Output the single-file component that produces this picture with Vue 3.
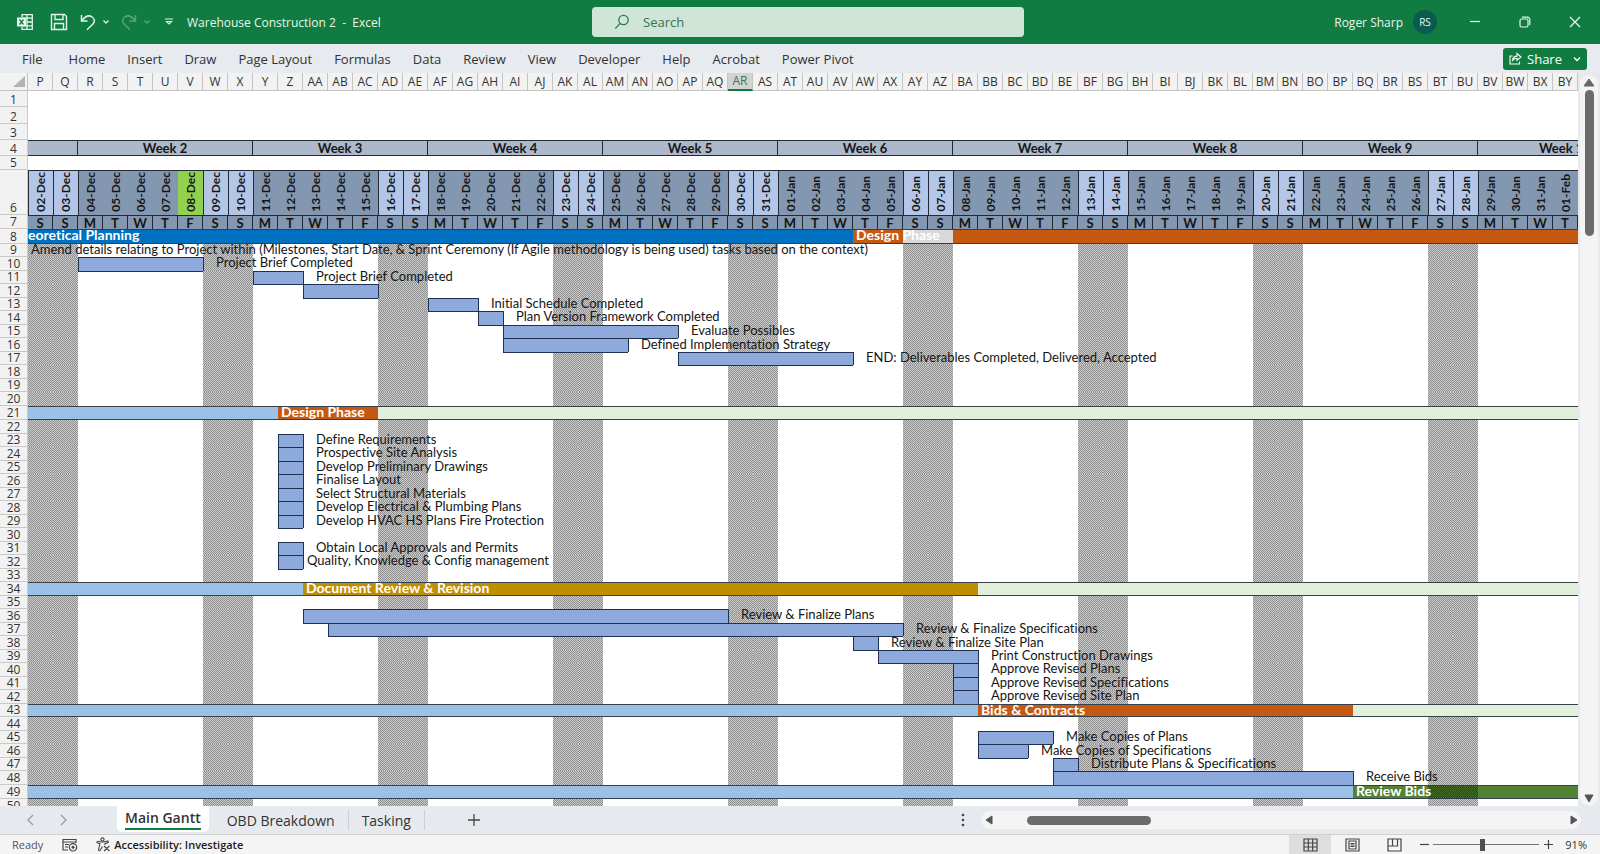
<script setup>
import { ref } from 'vue'

const menus = ['Home', 'Insert', 'Draw', 'Page Layout', 'Formulas', 'Data', 'Review', 'View', 'Developer', 'Help', 'Acrobat', 'Power Pivot']
const search = ref('')
const zoom = ref(91)

const COLS = 62
const letters = 'ABCDEFGHIJKLMNOPQRSTUVWXYZ'
const colName = (n) => (n < 26 ? letters[n] : letters[Math.floor(n / 26) - 1] + letters[n % 26])
const columns = Array.from({ length: COLS }, (_, i) => colName(i + 15))
const weekend = (c) => c % 7 < 2

const months = ['Jan', 'Feb', 'Mar', 'Apr', 'May', 'Jun', 'Jul', 'Aug', 'Sep', 'Oct', 'Nov', 'Dec']
const dates = columns.map((_, i) => {
  const d = new Date(2023, 11, 2 + i)
  return String(d.getDate()).padStart(2, '0') + '-' + months[d.getMonth()]
})
const dayLetters = columns.map((_, i) => 'SSMTWTF'[i % 7])
const weeks = [2, 3, 4, 5, 6, 7, 8, 9]

// Task bars: row -> [first column, column after the last]
const bars = {
  10: [2, 7], 11: [9, 11], 12: [11, 14], 13: [16, 18], 14: [18, 19], 15: [19, 26], 16: [19, 24], 17: [26, 33],
  23: [10, 11], 24: [10, 11], 25: [10, 11], 26: [10, 11], 27: [10, 11], 28: [10, 11], 29: [10, 11],
  31: [10, 11], 32: [10, 11],
  36: [11, 28], 37: [12, 35], 38: [33, 34], 39: [34, 38], 40: [37, 38], 41: [37, 38], 42: [37, 38],
  45: [38, 41], 46: [38, 40], 47: [41, 42], 48: [41, 53],
}
const labels = {
  10: 'Project Brief Completed', 11: 'Project Brief Completed', 13: 'Initial Schedule Completed',
  14: 'Plan Version Framework Completed', 15: 'Evaluate Possibles', 16: 'Defined Implementation Strategy',
  17: 'END: Deliverables Completed, Delivered, Accepted',
  23: 'Define Requirements', 24: 'Prospective Site Analysis', 25: 'Develop Preliminary Drawings',
  26: 'Finalise Layout', 27: 'Select Structural Materials', 28: 'Develop Electrical & Plumbing Plans',
  29: 'Develop HVAC HS Plans Fire Protection', 31: 'Obtain Local Approvals and Permits',
  32: 'Quality, Knowledge & Config management',
  36: 'Review & Finalize Plans', 37: 'Review & Finalize Specifications', 38: 'Review & Finalize Site Plan',
  39: 'Print Construction Drawings', 40: 'Approve Revised Plans', 41: 'Approve Revised Specifications',
  42: 'Approve Revised Site Plan', 45: 'Make Copies of Plans', 46: 'Make Copies of Specifications',
  47: 'Distribute Plans & Specifications', 48: 'Receive Bids',
}
// Phase rows: segments of [columns, colour class, text]
const phases = {
  8: [[33, 'blue', 'eoretical Planning'], [2, 'orange', 'Design Phase'], [2, 'pale', ''], [25, 'orange', '']],
  21: [[10, 'sky', ''], [4, 'orange', 'Design Phase'], [48, 'mint', '']],
  34: [[11, 'sky', ''], [27, 'gold', 'Document Review & Revision'], [24, 'mint', '']],
  43: [[38, 'sky', ''], [15, 'orange', 'Bids & Contracts'], [9, 'mint', '']],
  49: [[53, 'sky', ''], [3, 'green', 'Review Bids'], [2, 'green hatch', ''], [4, 'green', '']],
}

const inBar = (r, c) => !!bars[r] && c >= bars[r][0] && c < bars[r][1]
const rows = []
for (let r = 8; r <= 50; r++) {
  if (phases[r]) {
    rows.push({ r, segments: phases[r] })
    continue
  }
  const cells = columns.map((_, c) => {
    const here = inBar(r, c)
    const above = inBar(r - 1, c)
    const edge = !!bars[r] && (c === bars[r][0] || c === bars[r][1])
    let text = ''
    if (r === 9 && c === 0) text = 'Amend details relating to Project within (Milestones, Start Date, & Sprint Ceremony (If Agile methodology is being used) tasks based on the context)'
    if (labels[r] && c === bars[r][1]) text = labels[r]
    return {
      text,
      cls: { off: weekend(c), bar: here, top: here || above, left: edge, label: text && r !== 32 && r !== 9, near: r === 32 || r === 9 },
    }
  })
  rows.push({ r, cells })
}
</script>

<template>
  <div class="app">
    <header class="titlebar">
      <div class="quick">
        <svg class="i-xl" width="18" height="18" viewBox="0 0 18 18" fill="none" stroke="#e8f6ee" stroke-width="1.3">
          <path d="M6 4V1.700h10.300v14.600H6V14M11 1.700v14.600M6 5.200h10.300M11 9h5.300M6 12.800h10.300" />
          <rect x="1" y="4.500" width="9" height="9" fill="#e8f6ee" stroke="none" />
          <path d="M3.500 6.500l4 5M7.500 6.500l-4 5" stroke="#107c41" />
        </svg>
        <button class="icon" aria-label="Save">
          <svg width="18" height="18" viewBox="0 0 18 18" fill="none" stroke="#e0f3e8" stroke-width="1.400">
            <path d="M1.500 1.500h13l2 2v13h-15zM5 1.500v5h8v-5M4.500 16.500v-6h9v6" />
          </svg>
        </button>
        <button class="icon" aria-label="Undo">
          <svg width="16" height="18" viewBox="0 0 16 18" fill="none" stroke="#e0f3e8" stroke-width="1.500">
            <path d="M1.500 2v6h6M1.800 7.800C5 3.500 9 1.800 12.200 4c2.800 2 2.800 5 .5 7.300L7 16.800" />
          </svg>
        </button>
        <button class="icon" aria-label="Undo list"><svg width="8" height="6" viewBox="0 0 8 6" fill="none" stroke="#e0f3e8" stroke-width="1.300"><path d="M1.500 1.500L4 4l2.500-2.500" /></svg></button>
        <button class="icon redo" aria-label="Redo">
          <svg width="16" height="18" viewBox="0 0 16 18" fill="none" stroke="#55a77a" stroke-width="1.500">
            <path d="M14.500 2v6h-6M14.200 7.800C11 3.500 7 1.800 3.800 4c-2.800 2-2.800 5-.5 7.300L9 16.800" />
          </svg>
        </button>
        <button class="icon" aria-label="Redo list"><svg width="8" height="6" viewBox="0 0 8 6" fill="none" stroke="#55a77a" stroke-width="1.300"><path d="M1.500 1.500L4 4l2.500-2.500" /></svg></button>
        <button class="icon custom" aria-label="Customise toolbar"><svg width="8" height="8" viewBox="0 0 8 8" fill="none" stroke="#e0f3e8" stroke-width="1.200"><path d="M0 1h8M1.500 3.500L4 6l2.500-2.500z" /></svg></button>
        <span class="doc">Warehouse Construction 2&nbsp; -&nbsp; Excel</span>
      </div>
      <label class="search">
        <svg width="16" height="16" viewBox="0 0 16 16" fill="none" stroke="#2a7a4c" stroke-width="1.300"><circle cx="9.500" cy="6" r="4.700" /><path d="M6.200 9.400L1.200 14.600" /></svg>
        <input v-model="search" type="text" placeholder="Search" aria-label="Search" />
      </label>
      <div class="account">
        <span class="user">Roger Sharp</span>
        <span class="avatar">RS</span>
        <button class="win" aria-label="Minimise"><svg width="12" height="12" viewBox="0 0 12 12" stroke="#e8f6ee" stroke-width="1.200"><path d="M1 5.500h10" /></svg></button>
        <button class="win" aria-label="Restore"><svg width="12" height="12" viewBox="0 0 12 12" fill="none" stroke="#e8f6ee" stroke-width="1.200"><rect x="1" y="3" width="8" height="8" rx="1.500" /><path d="M3 1.200h5.500a2.300 2.300 0 0 1 2.300 2.300V9" /></svg></button>
        <button class="win" aria-label="Close"><svg width="12" height="12" viewBox="0 0 12 12" stroke="#e8f6ee" stroke-width="1.300"><path d="M1 1l10 10M11 1L1 11" /></svg></button>
      </div>
    </header>

    <nav class="ribbon">
      <button class="menu file">File</button>
      <button v-for="m in menus" :key="m" class="menu">{{ m }}</button>
      <button class="share">
        <svg width="13" height="13" viewBox="0 0 13 13" fill="none" stroke="#fff" stroke-width="1.100"><path d="M3.500 4H1v8h9.500V9.500M3.500 8.500c.4-3 2-4.300 4.500-4.400V1.500L12 5 8 8.300V6.200C6 6.200 4.800 7 3.500 8.500z" /></svg>
        <span>Share</span>
        <svg class="caret" width="8" height="6" viewBox="0 0 8 6" fill="none" stroke="#fff" stroke-width="1.300"><path d="M1 1.500l3 3 3-3" /></svg>
      </button>
    </nav>

    <main class="work">
      <div class="sheet">
        <table>
          <colgroup><col class="numcol" /><col v-for="c in columns" :key="c" /></colgroup>
          <thead>
            <tr class="heads">
              <th class="corner"><svg width="12" height="12" viewBox="0 0 12 12"><path d="M12 0v11H0z" fill="#b3b3b3" /></svg></th>
              <th v-for="c in columns" :key="c" :class="{ active: c === 'AR' }">{{ c }}</th>
            </tr>
          </thead>
          <tbody>
            <tr v-for="n in 3" :key="n" class="blank"><th>{{ n }}</th><td :colspan="COLS"></td></tr>
            <tr class="weeks">
              <th>4</th>
              <td colspan="2"></td>
              <td v-for="w in weeks" :key="w" colspan="7">Week {{ w }}</td>
              <td colspan="4" class="cut">Week 10</td>
            </tr>
            <tr class="gap"><th>5</th><td :colspan="COLS"></td></tr>
            <tr class="dates">
              <th>6</th>
              <td v-for="(d, i) in dates" :key="d" :class="{ wk: weekend(i), today: i === 6, mon: i % 7 === 2 }"><span>{{ d }}</span></td>
            </tr>
            <tr class="days"><th>7</th><td v-for="(d, i) in dayLetters" :key="i">{{ d }}</td></tr>
            <tr v-for="row in rows" :key="row.r" class="task" :class="{ odd: row.r % 2, phase: row.segments, first: row.r === 8, tall: row.r === 21 || row.r === 49 }">
              <th>{{ row.r }}</th>
              <template v-if="row.segments">
                <td v-for="(s, i) in row.segments" :key="i" :colspan="s[0]" :class="s[1]">{{ s[2] }}</td>
              </template>
              <template v-else>
                <td v-for="(c, i) in row.cells" :key="i" :class="c.cls">{{ c.text }}</td>
              </template>
            </tr>
          </tbody>
        </table>
      </div>
      <div class="vbar">
        <button aria-label="Scroll up"><svg width="12" height="9" viewBox="0 0 12 9"><path d="M6 1l5 7H1z" fill="#666" stroke="#666" stroke-linejoin="round" /></svg></button>
        <div class="vthumb"></div>
        <button class="down" aria-label="Scroll down"><svg width="12" height="9" viewBox="0 0 12 9"><path d="M6 8l4-7H2z" fill="#555" stroke="#555" stroke-linejoin="round" /></svg></button>
      </div>
    </main>

    <div class="tabs">
      <button class="nav" aria-label="Previous sheet"><svg width="8" height="12" viewBox="0 0 8 12" fill="none" stroke="#9a9da0" stroke-width="1.300"><path d="M7 1L2 6l5 5" /></svg></button>
      <button class="nav second" aria-label="Next sheet"><svg width="8" height="12" viewBox="0 0 8 12" fill="none" stroke="#9a9da0" stroke-width="1.300"><path d="M1 1l5 5-5 5" /></svg></button>
      <button class="tab on"><span>Main Gantt</span></button>
      <button class="tab">OBD Breakdown</button>
      <button class="tab">Tasking</button>
      <button class="add" aria-label="New sheet"><svg width="12" height="12" viewBox="0 0 12 12" stroke="#444" stroke-width="1.300"><path d="M6 0v12M0 6h12" /></svg></button>
      <svg class="grip" width="4" height="14" viewBox="0 0 4 14" fill="#444"><circle cx="2" cy="2" r="1.300" /><circle cx="2" cy="7" r="1.300" /><circle cx="2" cy="12" r="1.300" /></svg>
      <div class="hbar">
        <button aria-label="Scroll left"><svg width="9" height="10" viewBox="0 0 9 10"><path d="M1 5l6-4v8z" fill="#555" stroke="#555" stroke-linejoin="round" /></svg></button>
        <div class="hthumb"></div>
        <button class="right" aria-label="Scroll right"><svg width="9" height="10" viewBox="0 0 9 10"><path d="M8 5L2 1v8z" fill="#555" stroke="#555" stroke-linejoin="round" /></svg></button>
      </div>
    </div>

    <footer class="status">
      <span class="ready">Ready</span>
      <svg class="macro" width="16" height="14" viewBox="0 0 16 14" fill="none" stroke="#444" stroke-width="1.200"><path d="M6 12H1V1.500h13V5M1 4h13M3 6.500h4M3 9h3" /><circle cx="11" cy="9.300" r="3.700" /><circle cx="11" cy="9.300" r="1.500" fill="#444" stroke="none" /></svg>
      <button class="access">
        <svg width="15" height="15" viewBox="0 0 15 15" fill="none" stroke="#444" stroke-width="1.100"><circle cx="6.500" cy="2.500" r="1.600" /><path d="M1 4.500c-.5 1 .3 1.400 3 2.200l-1.500 6c0 1.200 1.300 1.300 1.800.3L6.500 9.500M1.500 4.200L5 5h3l3.500-.9c1.200-.1 1.200 1.300.3 1.600L9 6.700V8M8 9l5.500 5M13.500 9L8 14" /></svg>
        <span>Accessibility: Investigate</span>
      </button>
      <button class="view on" aria-label="Normal view"><svg width="15" height="14" viewBox="0 0 15 14" fill="none" stroke="#444" stroke-width="1.200"><path d="M1 1h13v12H1zM1 5h13M1 9h13M5.300 1v12M9.700 1v12" /></svg></button>
      <button class="view" aria-label="Page layout view"><svg width="15" height="14" viewBox="0 0 15 14" fill="none" stroke="#444" stroke-width="1.200"><path d="M1 1h13v12H1zM4 3h7v8H4zM5.500 5.500h4M5.500 7h4M5.500 8.500h4" /></svg></button>
      <button class="view" aria-label="Page break view"><svg width="15" height="14" viewBox="0 0 15 14" fill="none" stroke="#444" stroke-width="1.200"><path d="M1 1h13v12H1zM1 8h9.500V1M5.500 1v7" /></svg></button>
      <button class="step" aria-label="Zoom out"><svg width="9" height="9" viewBox="0 0 9 9" stroke="#444" stroke-width="1.200"><path d="M0 4.500h9" /></svg></button>
      <input v-model="zoom" class="slider" type="range" min="0" max="195" aria-label="Zoom" />
      <button class="step" aria-label="Zoom in"><svg width="9" height="9" viewBox="0 0 9 9" stroke="#444" stroke-width="1.200"><path d="M0 4.500h9M4.500 0v9" /></svg></button>
      <span class="pct">{{ zoom }}%</span>
    </footer>
  </div>
</template>

<style>
body { margin: 0; }
</style>

<style scoped>
.app { display: flex; flex-direction: column; height: 100vh; overflow: hidden; font-family: "Open Sans", "Noto Sans", sans-serif; font-size: 13px; color: #333; background: #e6e9ed; }
button { font: inherit; color: inherit; background: none; border: 0; padding: 0; display: flex; align-items: center; justify-content: center; }
svg { display: block; flex: none; }

.titlebar { display: grid; grid-template-columns: 37fr 27fr 36fr; align-items: center; height: 44px; flex: none; background: #107c41; color: #e8f6ee; font-size: 12px; }
.quick { display: flex; align-items: center; padding-left: 16px; }
.icon { margin-left: 6px; }
.i-xl { margin-right: 10px; }
.icon[aria-label="Undo"] { margin-left: 12px; }
.icon.redo { margin-left: 11px; }
.icon.custom { margin-left: 14px; }
.doc { margin-left: 14px; white-space: nowrap; }
.search { display: flex; align-items: center; height: 30px; padding-left: 22px; gap: 13px; border-radius: 4px; background: #cfe5d8; }
.search input { flex: 1; min-width: 0; border: 0; padding: 0; outline: 0; background: none; font: inherit; font-size: 13px; color: #26693f; }
.search input::placeholder { color: #35704f; opacity: 1; }
.account { display: flex; align-items: center; justify-content: flex-end; }
.avatar { width: 24px; height: 24px; line-height: 24px; margin-left: 10px; margin-right: 13px; border-radius: 50%; background: #0b5a50; text-align: center; font-size: 10px; }
.win { width: 50px; height: 32px; }

.ribbon { display: flex; align-items: center; gap: 22px; height: 29px; flex: none; padding: 0 13px 0 22px; background: #e7eaef; }
.menu { white-space: nowrap; }
.menu.file { margin-right: 4px; }
.share { margin-left: auto; height: 22px; width: 84px; gap: 5px; border-radius: 3px; background: #107c41; color: #fff; }
.caret { margin-left: 6px; }

.work { display: flex; flex: 1; min-height: 0; }
.sheet { flex: 1; min-width: 0; overflow: hidden; background: #fff; }
table { width: 100%; table-layout: fixed; border-collapse: separate; border-spacing: 0; }
.numcol { width: 28px; }
th, td { box-sizing: border-box; padding: 0; height: 14px; line-height: 12px; white-space: nowrap; }
th { font-weight: 400; font-size: 12px; color: #333; }
tbody th { background: #f2f2f2; border-bottom: 1px solid #c9c9c9; border-right: 1px solid #c9c9c9; vertical-align: bottom; }
td { font-family: Lato, sans-serif; font-size: 13px; font-variant-ligatures: none; color: #151515; text-align: left; }
.task td { line-height: 10px; vertical-align: top; }
.odd > * { height: 13px; }
.tall > * { height: 14px; }
.heads th { height: 18px; line-height: 16px; background: #f2f2f2; border-right: 1px solid #c4c4c4; border-bottom: 1px solid #c4c4c4; }
.heads .corner { padding-left: 13px; }
.heads .active { background: #d2d3d2; color: #3c7a55; border-bottom: 2px solid #107c41; }
.blank > * { height: 16px; }
.blank:nth-child(2) > * { height: 17px; }
.weeks > * { height: 16px; }
.weeks td { background: #adb9ca; border: solid #222b35; border-width: 1px 1px 1px 0; text-align: center; font-weight: 700; }
.weeks td.cut { border-right: 0; padding-left: 61px; text-align: left; overflow: hidden; }
.gap > * { height: 14px; }
.dates > * { height: 45px; }
.dates td { background: #8497b0; border-top: 1px solid #222b35; font-weight: 700; font-size: 12px; vertical-align: bottom; }
.dates span { display: block; margin: 0 auto 3px; writing-mode: vertical-rl; transform: rotate(180deg); line-height: 24px; }
.dates .wk { background: #b4c6e7; border-left: 1px solid #222b35; }
.dates .mon { border-left: 1px solid #222b35; }
.dates .today { background: #92d050; }
.days > * { height: 14px; }
.days td { background: #8497b0; border: solid #222b35; border-width: 1px 1px 0 0; text-align: center; font-weight: 700; }

.off { background: repeating-conic-gradient(#909090 0 25%, #cacaca 0 50%) 0 0 / 2px 2px; }
.bar { background: #8ea9db; }
.top { border-top: 1px solid #203050; }
.left { border-left: 1px solid #203050; }
.label { padding-left: 12px; }
.near { padding-left: 3px; }
.phase td { border: solid #34404c; border-width: 1px 0; color: #fff; font-weight: 700; font-size: 14px; padding-left: 3px; }
.first > * { height: 15px; }
.phase.first td:nth-child(2) { padding-left: 0; }
.blue { background: #0070c0; }
.orange { background: #c65911; }
.pale { background: #d9d9d9; }
.sky { background: #9bc2e6; }
.mint { background: #e2efda; }
.gold { background: #bf8f00; }
.green { background: #548235; }
.green.hatch { background: repeating-conic-gradient(#2c4d16 0 25%, #426b28 0 50%) 0 0 / 2px 2px; }

.vbar { display: flex; flex-direction: column; align-items: center; width: 18px; margin: 2px 2px 0; border-radius: 9px; background: #f4f4f4; }
.vbar button { height: 15px; }
.vthumb { width: 9px; height: 146px; border-radius: 5px; background: #6b6b6b; }
.vbar .down { margin-top: auto; }

.tabs { display: flex; align-items: center; height: 29px; flex: none; background: #e6e9ed; border-bottom: 1px solid #d0d0d0; box-sizing: border-box; padding-right: 19px; }
.nav { margin-left: 26px; }
.tab { height: 20px; padding: 0 13px; border-right: 1px solid #cdd0d4; font-size: 14px; white-space: nowrap; }
.tab.on { height: 26px; align-self: flex-start; margin-left: 49px; margin-right: 5px; padding: 0 8px; border: 0; border-radius: 0 0 5px 5px; background: #fff; font-weight: 600; }
.tab.on span { line-height: 20px; border-bottom: 2px solid #107c41; }
.add { margin-left: 43px; }
.grip { margin-left: auto; margin-right: 16px; }
.hbar { display: flex; align-items: center; flex: 0 0 600px; height: 18px; border-radius: 9px; background: #f4f4f4; }
.hbar button { width: 16px; height: 18px; }
.hthumb { width: 124px; height: 9px; margin-left: 30px; border-radius: 5px; background: #6b6b6b; }
.hbar .right { margin-left: auto; }

.status { display: flex; align-items: center; height: 19px; flex: none; padding: 0 13px 0 12px; background: #f4f4f4; font-size: 11px; }
.ready { color: #555; }
.macro { margin-left: 19px; }
.access { margin-left: 18px; gap: 3px; font-weight: 600; color: #1c1c1c; white-space: nowrap; margin-right: auto; }
.view { width: 42px; height: 19px; }
.view.on { background: #dedede; }
.step { width: 20px; margin: 0 -1px; }
.slider { appearance: none; width: 106px; height: 14px; margin: 0; background: linear-gradient(#777, #777) center / 100% 1px no-repeat; }
.slider::-webkit-slider-thumb { appearance: none; width: 5px; height: 12px; background: #505050; }
.pct { width: 30px; text-align: right; }
</style>
